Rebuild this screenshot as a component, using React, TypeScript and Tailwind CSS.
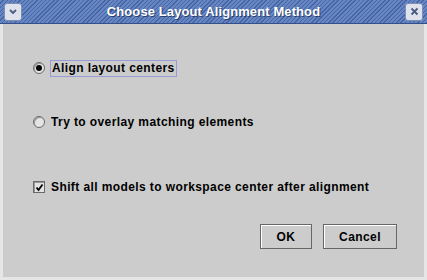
import React from 'react';

const font = { fontFamily: '"Liberation Sans", Arial, sans-serif' };

const Radio: React.FC<{ checked?: boolean }> = ({ checked }) => (
  <span className="flex h-[12px] w-[12px] items-center justify-center rounded-full border border-[#6a6a6a] bg-[#e4e4e4] shadow-[inset_1px_1px_0_#999]">
    {checked && <span className="h-[6px] w-[6px] rounded-full bg-black" />}
  </span>
);

export default function App() {
  return (
    <div className="flex h-[280px] w-[427px] flex-col bg-[#cccccc] text-black" style={font}>
      {/* title bar */}
      <div className="flex h-[24px] items-center border-b border-[#33508a] bg-[repeating-linear-gradient(135deg,#6585c3_0px,#6585c3_2px,#4865a3_2px,#4865a3_3px)] px-[4px]">
        <div className="flex h-[18px] w-[18px] items-center justify-center rounded-[3px] border border-[#7d8fb4] bg-[#dde2ec]">
          <svg width="10" height="8" viewBox="0 0 10 8">
            <path d="M2 2 L5 5 L8 2" fill="none" stroke="#4a5a80" strokeWidth="1.8" />
          </svg>
        </div>
        <div className="flex-1 text-center text-[13px] font-bold tracking-[0.1px] text-white [text-shadow:1px_1px_0_#2b3f6a]">
          Choose Layout Alignment Method
        </div>
        <div className="flex h-[18px] w-[18px] items-center justify-center rounded-[3px] border border-[#7d8fb4] bg-[#dde2ec]">
          <svg width="9" height="9" viewBox="0 0 9 9">
            <path d="M1.5 1.5 L7.5 7.5 M7.5 1.5 L1.5 7.5" stroke="#4a5a80" strokeWidth="1.8" />
          </svg>
        </div>
      </div>

      {/* body */}
      <div className="flex flex-1 flex-col border-x-[3px] border-b-[3px] border-[#e6e6e6] pl-[30px] pr-[27px] text-[12px] font-bold tracking-[0.4px]">
        <div className="mt-[35px] flex h-[18px] items-center gap-[5px]">
          <Radio checked />
          <span className="border border-[#9a9ad8] px-[1px] leading-[15px]">Align layout centers</span>
        </div>
        <div className="mt-[36px] flex h-[18px] items-center gap-[6px]">
          <Radio />
          <span className="leading-[15px]">Try to overlay matching elements</span>
        </div>
        <div className="mt-[47px] flex h-[18px] items-center gap-[6px]">
          <span className="flex h-[12px] w-[12px] items-center justify-center border border-[#6a6a6a] bg-[#e4e4e4] shadow-[inset_1px_1px_0_#999]">
            <svg width="9" height="9" viewBox="0 0 9 9">
              <path d="M1.5 4.5 L3.5 7 L7.5 1.5" fill="none" stroke="#000" strokeWidth="1.8" />
            </svg>
          </span>
          <span className="whitespace-nowrap leading-[15px]">Shift all models to workspace center after alignment</span>
        </div>
        <div className="mt-[28px] flex justify-end gap-[11px]">
          <button className="h-[25px] w-[52px] border border-[#666] bg-[#cccccc] font-bold shadow-[inset_1px_1px_0_#fff]">
            OK
          </button>
          <button className="h-[25px] w-[74px] border border-[#666] bg-[#cccccc] font-bold shadow-[inset_1px_1px_0_#fff]">
            Cancel
          </button>
        </div>
      </div>
    </div>
  );
}
